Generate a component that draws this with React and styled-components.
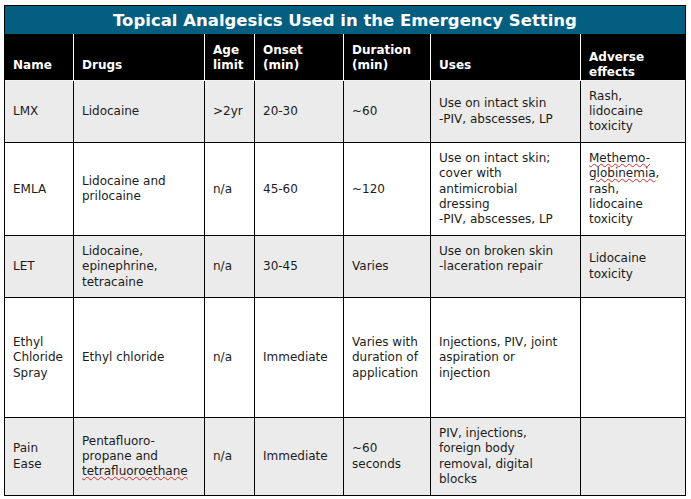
import React from "react";
import styled, { createGlobalStyle } from "styled-components";

const Global = createGlobalStyle`
  html, body { margin: 0; padding: 0; background: #ffffff; }
  body { font-family: "DejaVu Sans", Verdana, sans-serif; }
`;

const Page = styled.div`
  padding: 5px 0 0 4px;
`;

const Table = styled.div`
  width: 682px;
  box-sizing: border-box;
  border: 1px solid #000;
`;

const Title = styled.div`
  height: 28px;
  background: #045e7f;
  color: #ffffff;
  font-family: "DejaVu Sans", Verdana, sans-serif;
  font-weight: bold;
  font-size: 16.5px;
  display: flex;
  align-items: center;
  justify-content: center;
  padding-top: 1px;
  box-sizing: border-box;
`;

const COLS = "69px 131px 50px 89px 87px 150px 1fr";

const HeadRow = styled.div`
  display: grid;
  grid-template-columns: ${COLS};
  height: 46px;
  background: #000;
  border-bottom: 1px solid #f2f2f2;
`;

const HeadCell = styled.div`
  display: flex;
  align-items: flex-end;
  padding: 0 4px ${(p) => (p.$low ? "0" : "7px")} 8px;
  border-right: 1px solid #ffffff;
  color: #ffffff;
  font-weight: bold;
  font-size: 12px;
  line-height: 15px;
  white-space: pre-line;
  &:last-child { border-right: none; }
`;

const Row = styled.div`
  display: grid;
  grid-template-columns: ${COLS};
  min-height: ${(p) => p.$minH || 0}px;
  background: ${(p) => (p.$shade ? "#ebebeb" : "#ffffff")};
  border-top: ${(p) => (p.$first ? "none" : "1px solid #000")};
`;

const Cell = styled.div`
  display: flex;
  align-items: center;
  padding: 7.5px 4px 7.5px 8px;
  border-right: 1px solid #000;
  color: #1c1c1c;
  font-size: 12px;
  line-height: 15.4px;
  white-space: pre-line;
  &:last-child { border-right: none; }
`;

const Misspelled = styled.span`
  text-decoration: underline wavy #d42a2a;
  text-decoration-thickness: 1px;
  text-underline-offset: 1px;
`;

const headers = [
  { t: "Name" },
  { t: "Drugs" },
  { t: "Age\nlimit" },
  { t: "Onset\n(min)" },
  { t: "Duration\n(min)" },
  { t: "Uses" },
  { t: "Adverse\neffects", low: true },
];

const rows = [
  {
    shade: true,
    cells: [
      "LMX",
      "Lidocaine",
      ">2yr",
      "20-30",
      "~60",
      "Use on intact skin\n-PIV, abscesses, LP",
      "Rash,\nlidocaine\ntoxicity",
    ],
  },
  {
    shade: false,
    cells: [
      "EMLA",
      "Lidocaine and\nprilocaine",
      "n/a",
      "45-60",
      "~120",
      "Use on intact skin;\ncover with\nantimicrobial\ndressing\n-PIV, abscesses, LP",
      <span>
        <Misspelled>Methemo-</Misspelled>
        {"\n"}
        <Misspelled>globinemia</Misspelled>
        {",\nrash,\nlidocaine\ntoxicity"}
      </span>,
    ],
  },
  {
    shade: true,
    cells: [
      "LET",
      "Lidocaine,\nepinephrine,\ntetracaine",
      "n/a",
      "30-45",
      "Varies",
      "Use on broken skin\n-laceration repair\n\u00a0",
      "Lidocaine\ntoxicity",
    ],
  },
  {
    shade: false,
    minH: 119,
    cells: [
      "Ethyl\nChloride\nSpray",
      "Ethyl chloride",
      "n/a",
      "Immediate",
      "Varies with\nduration of\napplication",
      "Injections, PIV, joint\naspiration or\ninjection",
      "",
    ],
  },
  {
    shade: true,
    cells: [
      "Pain\nEase",
      <span>
        {"Pentafluoro-\npropane and\n"}
        <Misspelled>tetrafluoroethane</Misspelled>
      </span>,
      "n/a",
      "Immediate",
      "~60\nseconds",
      "PIV, injections,\nforeign body\nremoval, digital\nblocks",
      "",
    ],
  },
];

export default function App() {
  return (
    <Page>
      <Global />
      <Table>
        <Title>Topical Analgesics Used in the Emergency Setting</Title>
        <HeadRow>
          {headers.map((h, i) => (
            <HeadCell key={i} $low={h.low}>
              {h.t}
            </HeadCell>
          ))}
        </HeadRow>
        {rows.map((r, i) => (
          <Row key={i} $shade={r.shade} $first={i === 0} $minH={r.minH}>
            {r.cells.map((c, j) => (
              <Cell key={j}>{c}</Cell>
            ))}
          </Row>
        ))}
      </Table>
    </Page>
  );
}
